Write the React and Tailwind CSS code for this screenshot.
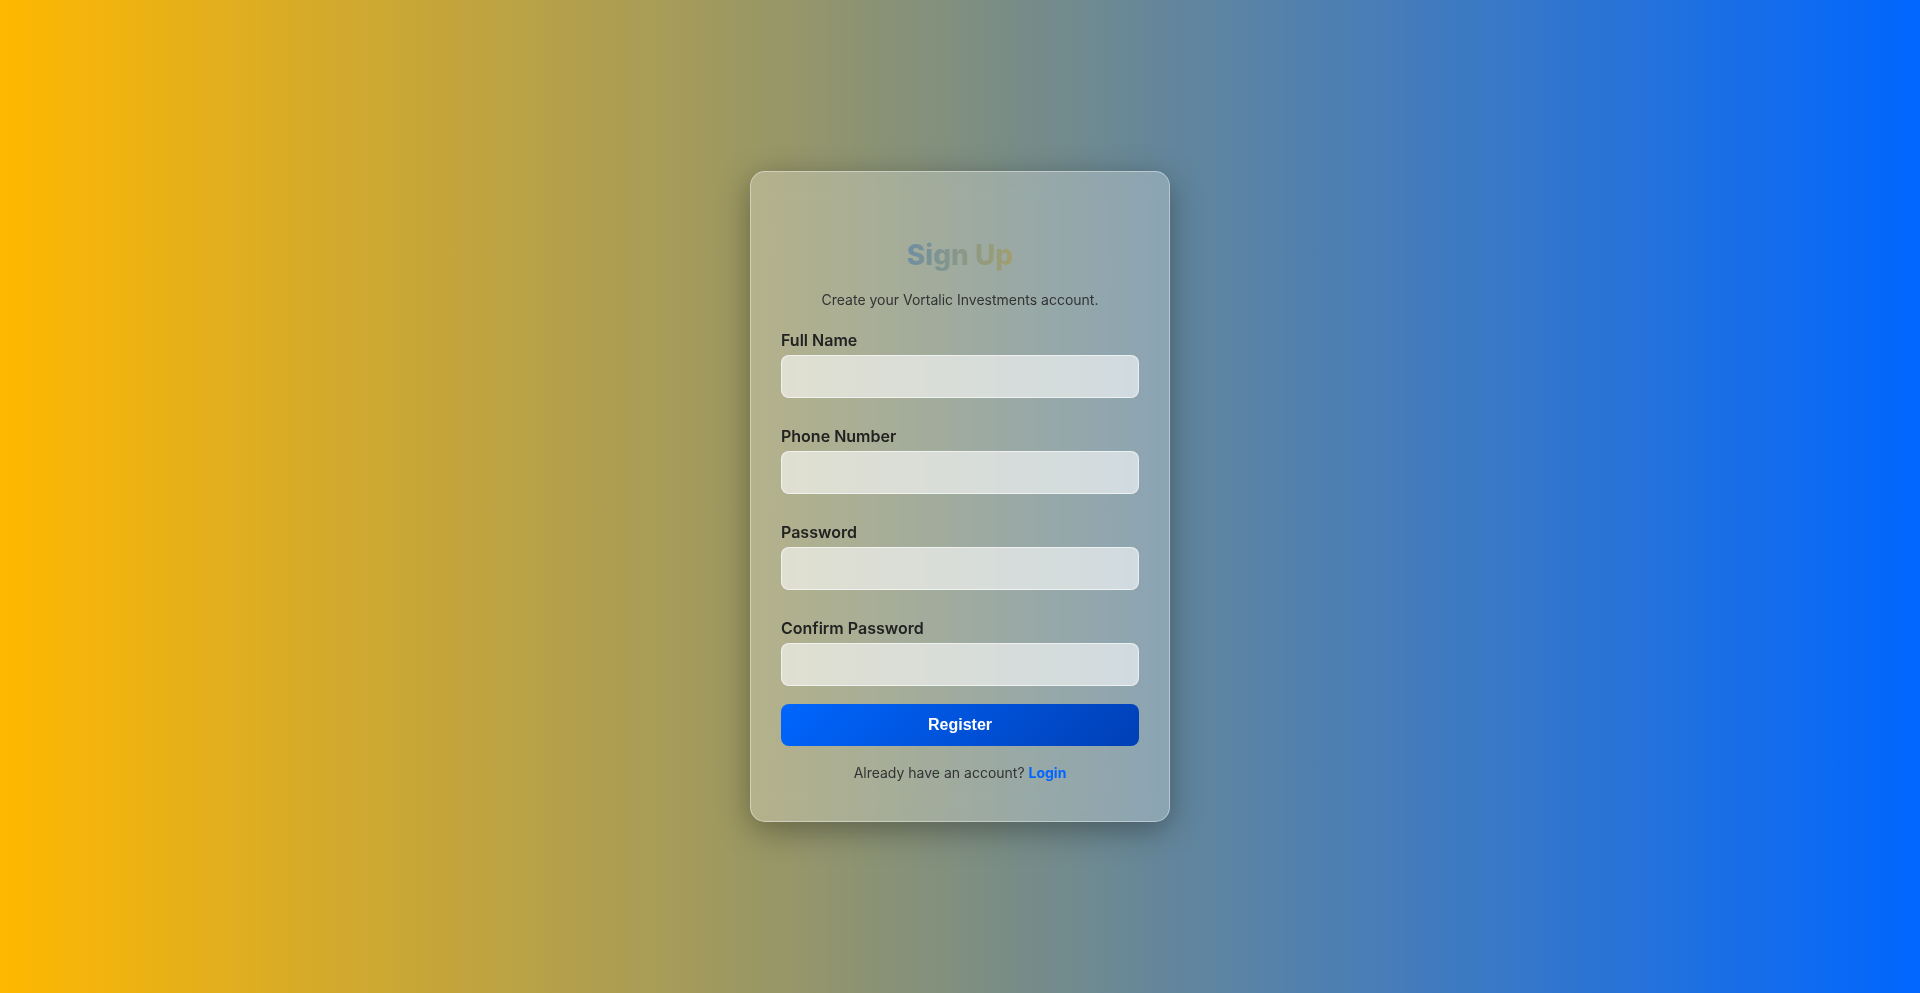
import React from 'react';

const fields = [
  { id: 'name', label: 'Full Name', type: 'text' },
  { id: 'phone', label: 'Phone Number', type: 'tel' },
  { id: 'password', label: 'Password', type: 'password' },
  { id: 'confirm', label: 'Confirm Password', type: 'password' },
];

export default function App() {
  return (
    <div
      className="min-h-screen w-full flex items-center justify-center bg-[linear-gradient(to_right,#ffb800,#0066ff)]"
      style={{ fontFamily: 'Inter, "Liberation Sans", sans-serif' }}
    >
      <div className="w-[420px] rounded-[15px] border border-white/40 bg-white/25 backdrop-blur-md shadow-[0_8px_32px_rgba(0,0,0,0.35)] px-[30px] pt-[66px] pb-[38px]">
        <h1 className="text-center text-[28px] leading-[34px] font-extrabold bg-[linear-gradient(to_right,#0066ff,#ffb800)] bg-clip-text text-transparent opacity-70">
          Sign Up
        </h1>
        <p className="mt-[18px] text-center text-[14px] leading-[20px] text-[#333]">
          Create your Vortalic Investments account.
        </p>

        <form className="mt-[20px]" onSubmit={(e) => e.preventDefault()}>
          {fields.map((f, i) => (
            <div key={f.id} className={i < fields.length - 1 ? 'mb-[28px]' : 'mb-[18px]'}>
              <label htmlFor={f.id} className="block mb-[5px] text-[16px] leading-[20px] font-semibold text-[#222]">
                {f.label}
              </label>
              <input
                id={f.id}
                type={f.type}
                className="block w-full h-[43px] rounded-lg border border-white/60 bg-white/60 px-3 text-[14px] text-[#222] outline-none"
              />
            </div>
          ))}

          <button
            type="submit"
            className="w-full h-[42px] rounded-lg bg-[linear-gradient(135deg,#0066ff,#003fb5)] text-white text-[16px] font-bold"
            style={{ fontFamily: '"Liberation Sans", Arial, sans-serif' }}
          >
            Register
          </button>
        </form>

        <p className="mt-[17px] text-center text-[14px] leading-[20px] text-[#333]">
          Already have an account?{' '}
          <a href="#" className="font-bold text-[#0066ff]">
            Login
          </a>
        </p>
      </div>
    </div>
  );
}
